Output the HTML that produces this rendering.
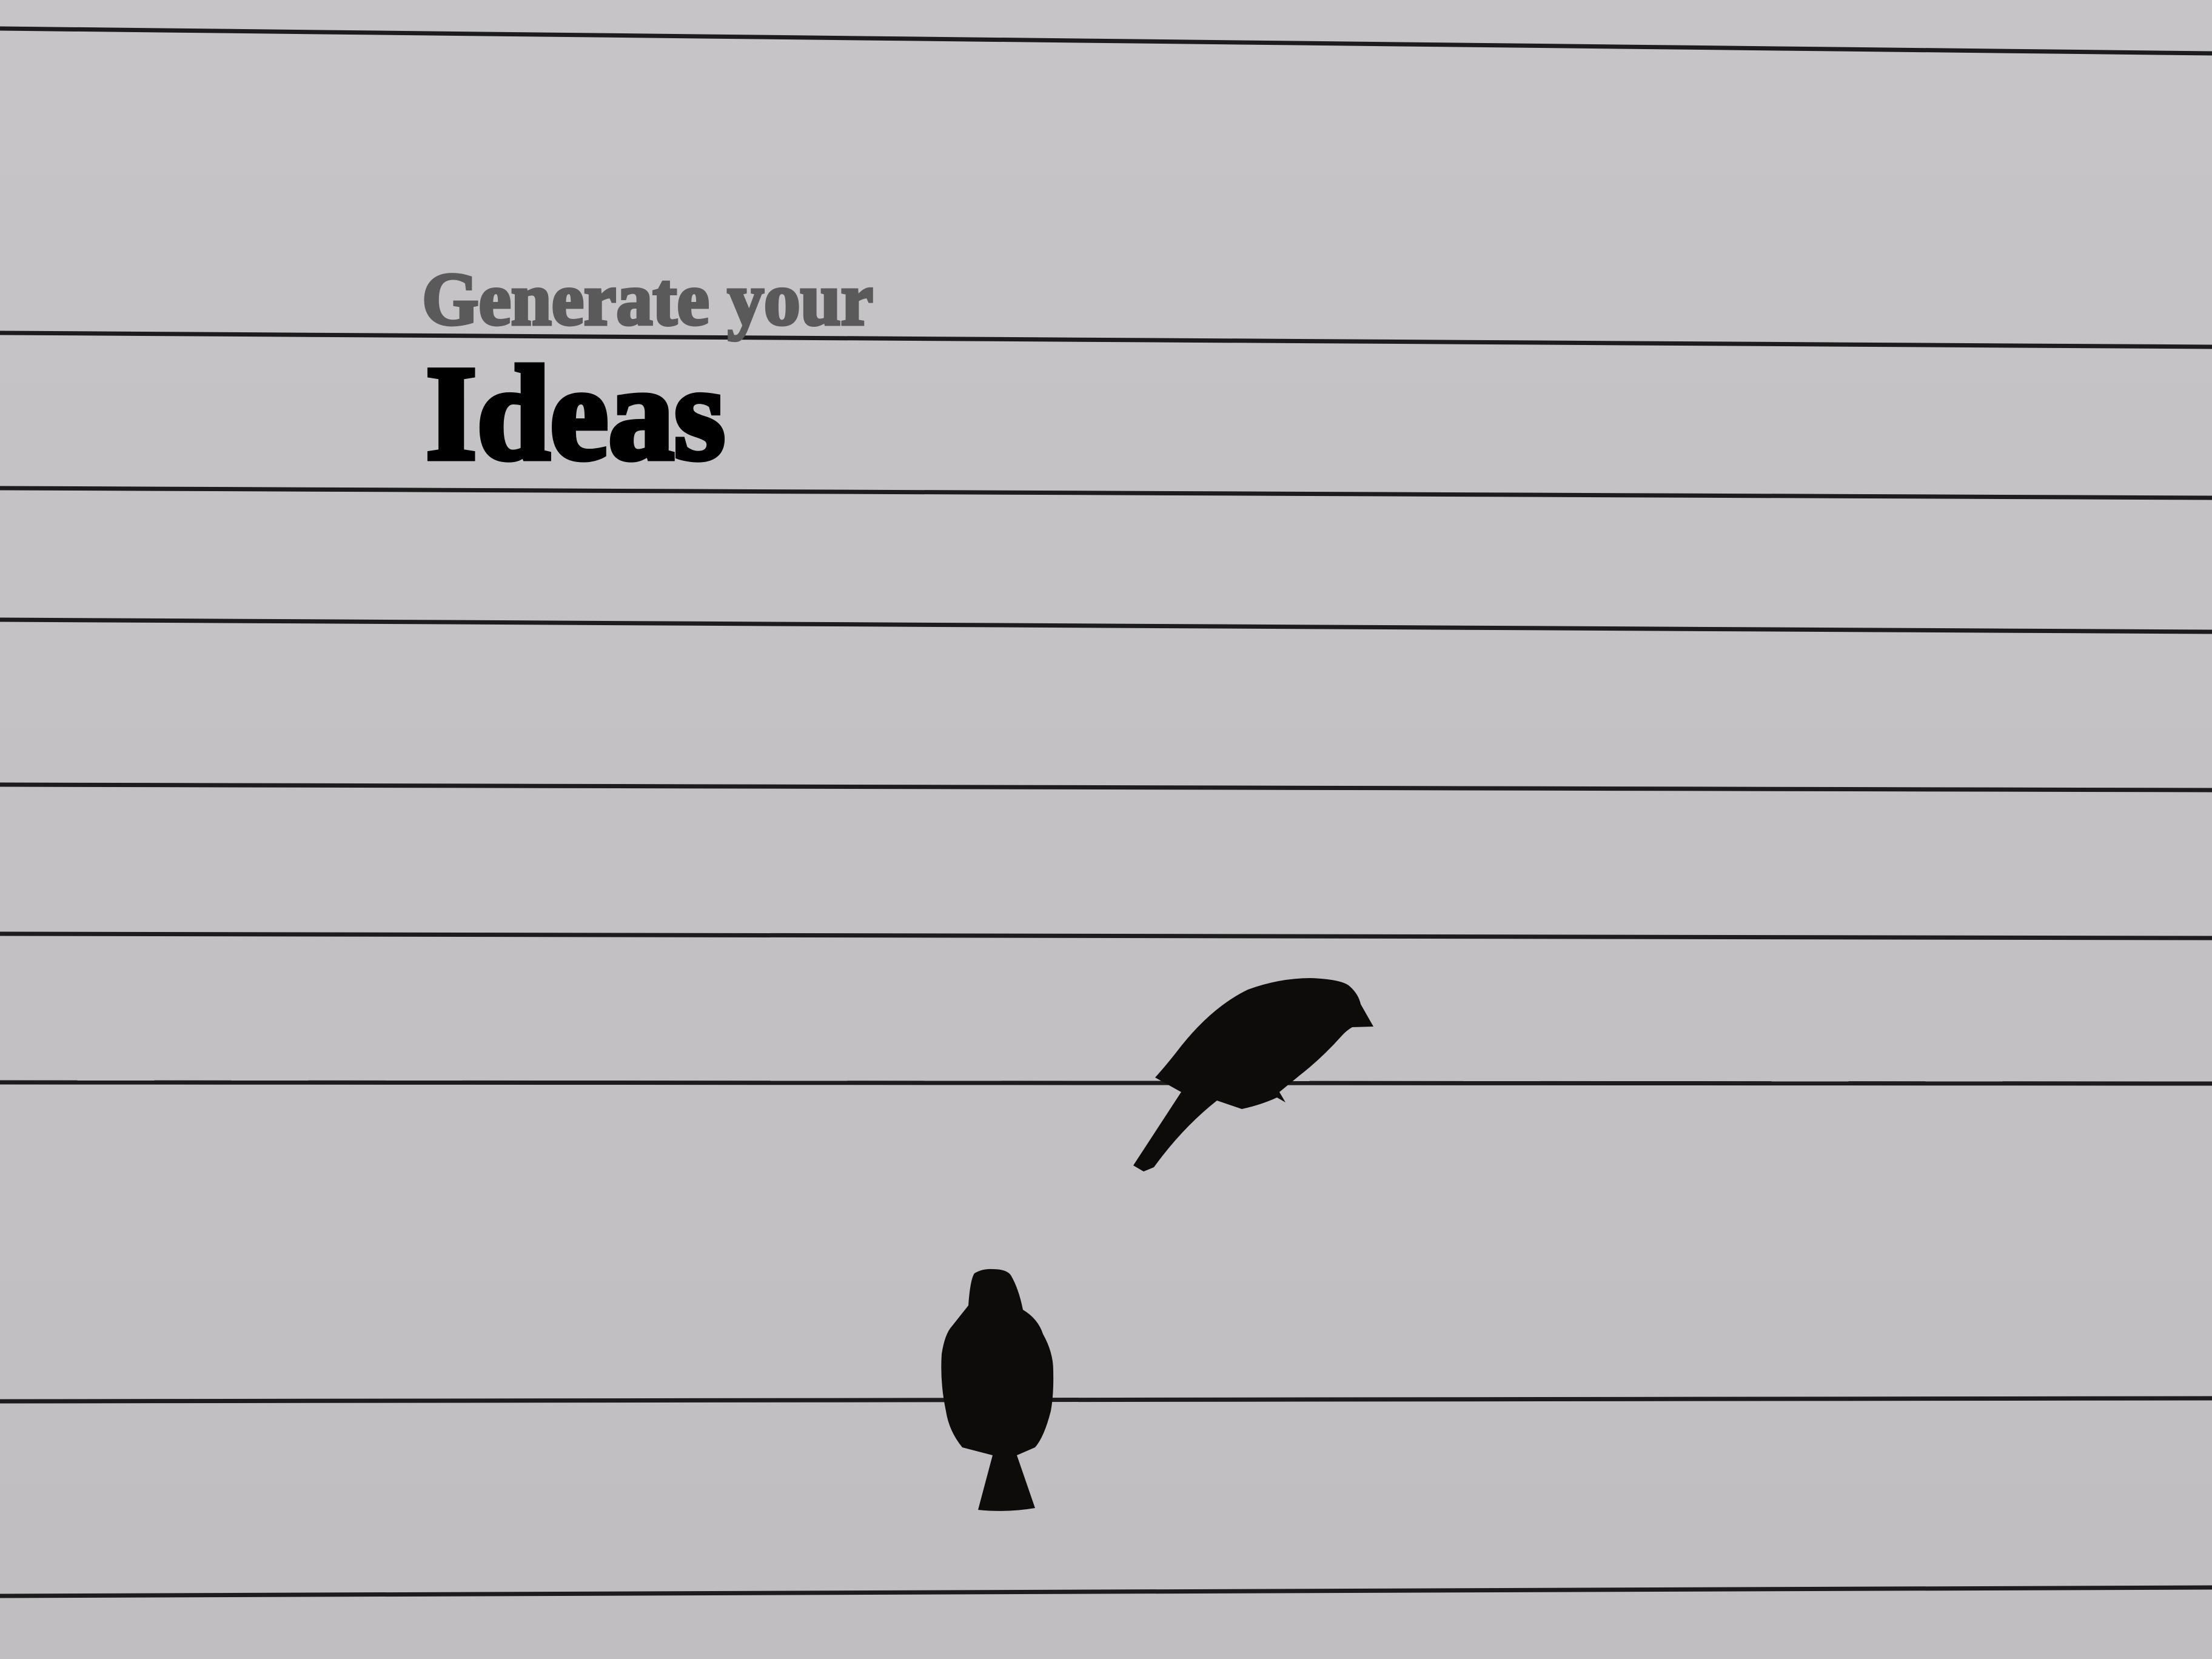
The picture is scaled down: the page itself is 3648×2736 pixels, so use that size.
<!DOCTYPE html>
<html><head><meta charset="utf-8"><style>html,body{margin:0;padding:0;background:#c4c2c4;}svg{display:block}</style></head>
<body>
<svg width="3648" height="2736" viewBox="0 0 3648 2736" xmlns="http://www.w3.org/2000/svg">
<defs><linearGradient id="bg" x1="0" y1="0" x2="0" y2="1"><stop offset="0" stop-color="#c6c4c7"/><stop offset="1" stop-color="#c0bec0"/></linearGradient></defs>
<rect width="3648" height="2736" fill="url(#bg)"/>
<g stroke="#1c1c1c" stroke-width="7" fill="none">
<line x1="0" y1="47" x2="3648" y2="88"/>
<line x1="0" y1="549" x2="3648" y2="572"/>
<line x1="0" y1="805" x2="3648" y2="821"/>
<line x1="0" y1="1022" x2="3648" y2="1042"/>
<line x1="0" y1="1294" x2="3648" y2="1303"/>
<line x1="0" y1="1540" x2="3648" y2="1547"/>
<line x1="0" y1="1785" x2="3648" y2="1787"/>
<line x1="0" y1="2311" x2="3648" y2="2306"/>
<line x1="0" y1="2632" x2="3648" y2="2618"/>
</g>
<text x="696" y="535" font-family="Liberation Serif, serif" font-weight="bold" font-size="124" fill="#5a5a5a" stroke="#5a5a5a" stroke-width="5" textLength="744" lengthAdjust="spacingAndGlyphs">Generate your</text>
<text x="702" y="756" font-family="Liberation Serif, serif" font-weight="bold" font-size="222" fill="#000" stroke="#000" stroke-width="9" textLength="494" lengthAdjust="spacingAndGlyphs">Ideas</text>
<path fill="#0e0b0b" d="M1869,1922 L1948,1801 L1905,1777 Q1925,1755 1948,1725 Q2000,1660 2058,1632 Q2110,1613 2162,1613 Q2210,1615 2224,1625 Q2240,1638 2244,1656 L2265,1693 L2230,1694 Q2220,1700 2213,1708 Q2180,1745 2144,1773 L2110,1801 L2120,1818 L2106,1810 Q2080,1822 2048,1829 L2007,1815 Q1950,1860 1903,1925 L1886,1932 Z"/>
<path fill="#0e0b0b" d="M1637,2093 Q1660,2093 1667,2103 Q1680,2125 1687,2160 Q1712,2175 1720,2200 Q1737,2230 1737,2260 Q1738,2300 1733,2327 Q1722,2370 1707,2387 L1677,2400 L1707,2487 Q1660,2495 1613,2490 L1637,2400 L1587,2387 Q1565,2360 1560,2327 Q1550,2280 1553,2233 Q1558,2200 1570,2187 L1597,2153 Q1600,2110 1607,2100 Q1620,2092 1637,2093 Z"/>
</svg>
</body></html>
